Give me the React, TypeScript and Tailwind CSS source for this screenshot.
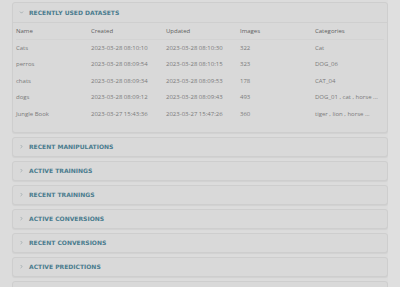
import { ChevronDown, ChevronRight } from "lucide-react";

interface Dataset {
  name: string;
  created: string;
  updated: string;
  images: number;
  categories: string;
}

const datasets: Dataset[] = [
  { name: "Cats", created: "2023-03-28 08:10:10", updated: "2023-03-28 08:10:30", images: 322, categories: "Cat" },
  { name: "perros", created: "2023-03-28 08:09:54", updated: "2023-03-28 08:10:15", images: 323, categories: "DOG_06" },
  { name: "chats", created: "2023-03-28 08:09:34", updated: "2023-03-28 08:09:53", images: 178, categories: "CAT_04" },
  { name: "dogs", created: "2023-03-28 08:09:12", updated: "2023-03-28 08:09:43", images: 493, categories: "DOG_01 , cat , horse ..." },
  { name: "Jungle Book", created: "2023-03-27 15:43:36", updated: "2023-03-27 15:47:26", images: 360, categories: "tiger , lion , horse ..." },
];

const sections = [
  "RECENT MANIPULATIONS",
  "ACTIVE TRAININGS",
  "RECENT TRAININGS",
  "ACTIVE CONVERSIONS",
  "RECENT CONVERSIONS",
  "ACTIVE PREDICTIONS",
];

const titleFont = { fontFamily: '"DejaVu Sans", "Liberation Sans", sans-serif' };
const bodyFont = { fontFamily: '"Open Sans", "Liberation Sans", sans-serif' };

const cols = "grid grid-cols-[75px_75px_74px_75px_1fr]";

export default function App() {
  return (
    <div className="w-[400px] h-[287px] overflow-hidden bg-[#dcdcdc] flex">
      <div className="w-[388px] pl-3 pt-[2px] flex flex-col gap-[4px]">
        {/* Recently used datasets */}
        <div className="bg-[#d9d9d9] border border-[#cecece] rounded-[3px] shadow-[0_1px_1px_rgba(0,0,0,0.05)]">
          <div className="h-[20px] flex items-center pl-[6px] gap-[5px] border-b border-[#cfcfcf]">
            <ChevronDown className="w-[5px] h-[5px] text-[#8a9a9e]" strokeWidth={3} />
            <span className="text-[6px] font-bold text-[#4a7c8e]" style={titleFont}>
              RECENTLY USED DATASETS
            </span>
          </div>
          <div className="px-[3px] pb-[9px] text-[6px]" style={bodyFont}>
            <div className={`${cols} h-[17px] items-center text-[#5f5f5f] border-b border-[#d3d3d3]`}>
              <span>Name</span>
              <span>Created</span>
              <span>Updated</span>
              <span>Images</span>
              <span>Categories</span>
            </div>
            {datasets.map((d) => (
              <div key={d.name} className={`${cols} h-[16.5px] items-center text-[#7a7a7a]`}>
                <span>{d.name}</span>
                <span>{d.created}</span>
                <span>{d.updated}</span>
                <span>{d.images}</span>
                <span className="whitespace-nowrap">{d.categories}</span>
              </div>
            ))}
          </div>
        </div>

        {sections.map((s) => (
          <div
            key={s}
            className="h-[20px] shrink-0 bg-[#d9d9d9] border border-[#cecece] rounded-[3px] shadow-[0_1px_1px_rgba(0,0,0,0.05)] flex items-center pl-[6px] gap-[5px]"
          >
            <ChevronRight className="w-[5px] h-[5px] text-[#8a9a9e]" strokeWidth={3} />
            <span className="text-[6px] font-bold text-[#4a7c8e]" style={titleFont}>
              {s}
            </span>
          </div>
        ))}
        {/* next panel, only its top edge shows */}
        <div className="h-[20px] shrink-0 bg-[#d9d9d9] border border-[#cecece] rounded-[3px]" />
      </div>
      <div className="flex-1 bg-[#dfdfdf]" />
    </div>
  );
}
